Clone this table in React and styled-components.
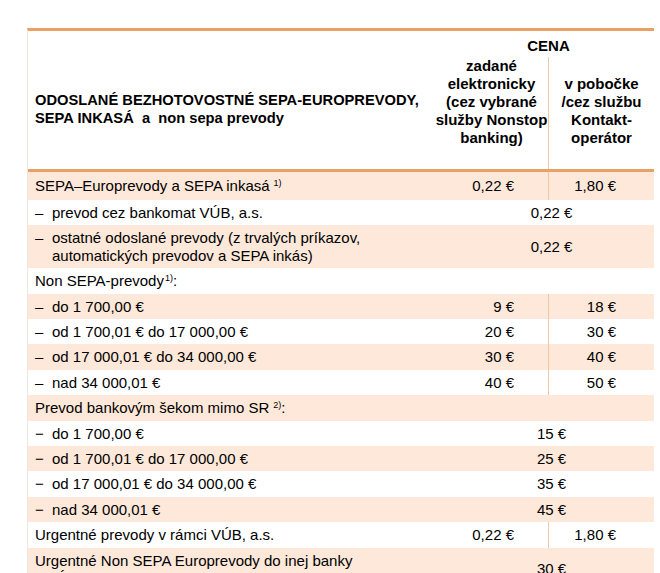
import React from 'react'
import styled, { createGlobalStyle } from 'styled-components'

const GlobalStyle = createGlobalStyle`
  body {
    margin: 0;
    background: #ffffff;
    font-family: "Liberation Sans Narrow", "Arial Narrow", "Liberation Sans", Arial, sans-serif;
    color: #000000;
  }
`

const ORANGE = '#e9a064'
const SHADE = '#fde8da'
const DIVIDER = '#f1c7a4'

const Table = styled.div`
  width: 627px;
  margin: 28px 0 0 27px;
  border-top: 3px solid ${ORANGE};
  border-left: 1px solid #ede7e3;
  box-sizing: border-box;
`

const Header = styled.div`
  display: grid;
  grid-template-columns: 415px 105px 106px;
  grid-template-rows: 26px 112px;
  border-bottom: 3px solid ${ORANGE};
  font-weight: bold;
  font-size: 15px;
`

const Title = styled.div`
  grid-row: 1 / 3;
  grid-column: 1;
  align-self: center;
  padding: 18px 0 0 7px;
  line-height: 18px;
  font-size: 14.7px;
`

const Cena = styled.div`
  grid-row: 1;
  grid-column: 2 / 4;
  text-align: center;
  line-height: 26px;
  padding-top: 2px;
`

const SubHead = styled.div`
  grid-row: 2;
  align-self: stretch;
  display: flex;
  flex-direction: column;
  justify-content: flex-end;
  align-items: center;
  padding-bottom: 22px;
  line-height: 18px;
  white-space: nowrap;
  ${(p) => p.$first && 'margin-left: -8px;'}
  ${(p) => p.$divided && `border-left: 1px solid ${DIVIDER};`}
`

const Row = styled.div`
  display: grid;
  grid-template-columns: 415px 105px 106px;
  background: ${(p) => (p.$shaded ? SHADE : '#ffffff')};
  min-height: ${(p) => (p.$tall ? '28px' : '25.4px')};
  font-size: 15px;
  line-height: 17.4px;
`

const Label = styled.div`
  display: flex;
  align-items: center;
  padding: 4px 0 4px 7px;
`

const Dash = styled.span`
  flex: 0 0 17px;
  align-self: flex-start;
`

const Lines = styled.div`
  display: flex;
  flex-direction: column;
`

const Sup = styled.sup`
  font-size: 9px;
  line-height: 0;
  vertical-align: 5px;
  margin-left: ${(p) => (p.$gap ? '4px' : '1px')};
`

const Value = styled.div`
  display: flex;
  align-items: center;
  justify-content: ${(p) => (p.$merged ? 'center' : 'flex-end')};
  grid-column: ${(p) => (p.$merged ? '2 / 4' : 'auto')};
  padding-right: ${(p) => (p.$merged ? '0' : p.$second ? '38px' : '34px')};
  padding-left: ${(p) => (p.$merged ? '6px' : '0')};
  ${(p) => p.$second && `border-left: 1px solid ${DIVIDER};`}
`

const rows = [
  { text: 'SEPA–Europrevody a SEPA inkasá', sup: '1)', supGap: true, a: '0,22 €', b: '1,80 €', tall: true },
  { dash: '–', text: 'prevod cez bankomat VÚB, a.s.', m: '0,22 €' },
  { dash: '–', text: ['ostatné odoslané prevody (z trvalých príkazov,', 'automatických prevodov a SEPA inkás)'], m: '0,22 €' },
  { text: 'Non SEPA-prevody', sup: '1)', tail: ':', m: '' },
  { dash: '–', text: 'do 1 700,00 €', a: '9 €', b: '18 €' },
  { dash: '–', text: 'od 1 700,01 € do 17 000,00 €', a: '20 €', b: '30 €' },
  { dash: '–', text: 'od 17 000,01 € do 34 000,00 €', a: '30 €', b: '40 €' },
  { dash: '–', text: 'nad 34 000,01 €', a: '40 €', b: '50 €' },
  { text: 'Prevod bankovým šekom mimo SR', sup: '2)', supGap: true, tail: ':', m: '' },
  { dash: '−', text: 'do 1 700,00 €', m: '15 €' },
  { dash: '−', text: 'od 1 700,01 € do 17 000,00 €', m: '25 €' },
  { dash: '−', text: 'od 17 000,01 € do 34 000,00 €', m: '35 €' },
  { dash: '−', text: 'nad 34 000,01 €', m: '45 €' },
  { text: 'Urgentné prevody v rámci VÚB, a.s.', a: '0,22 €', b: '1,80 €' },
  { text: ['Urgentné Non SEPA Europrevody do inej banky', 'v EÚ'], m: '30 €' },
]

function RowLabel({ row }) {
  const lines = Array.isArray(row.text) ? row.text : [row.text]
  return (
    <Label>
      {row.dash && <Dash>{row.dash}</Dash>}
      <Lines>
        {lines.map((line, i) => (
          <span key={i}>
            {line}
            {i === lines.length - 1 && row.sup && <Sup $gap={row.supGap}>{row.sup}</Sup>}
            {i === lines.length - 1 && row.tail}
          </span>
        ))}
      </Lines>
    </Label>
  )
}

export default function App() {
  return (
    <>
      <GlobalStyle />
      <Table>
        <Header>
          <Title>
            ODOSLANÉ BEZHOTOVOSTNÉ SEPA-EUROPREVODY,
            <br />
            SEPA INKASÁ&nbsp; a&nbsp; non sepa prevody
          </Title>
          <Cena>CENA</Cena>
          <SubHead $first>
            <span>zadané</span>
            <span>elektronicky</span>
            <span>(cez vybrané</span>
            <span>služby Nonstop</span>
            <span>banking)</span>
          </SubHead>
          <SubHead $divided>
            <span>v pobočke</span>
            <span>/cez službu</span>
            <span>Kontakt-</span>
            <span>operátor</span>
          </SubHead>
        </Header>
        {rows.map((row, i) => (
          <Row key={i} $shaded={i % 2 === 0} $tall={row.tall}>
            <RowLabel row={row} />
            {row.m !== undefined ? (
              <Value $merged>{row.m}</Value>
            ) : (
              <>
                <Value>{row.a}</Value>
                <Value $second>{row.b}</Value>
              </>
            )}
          </Row>
        ))}
      </Table>
    </>
  )
}
